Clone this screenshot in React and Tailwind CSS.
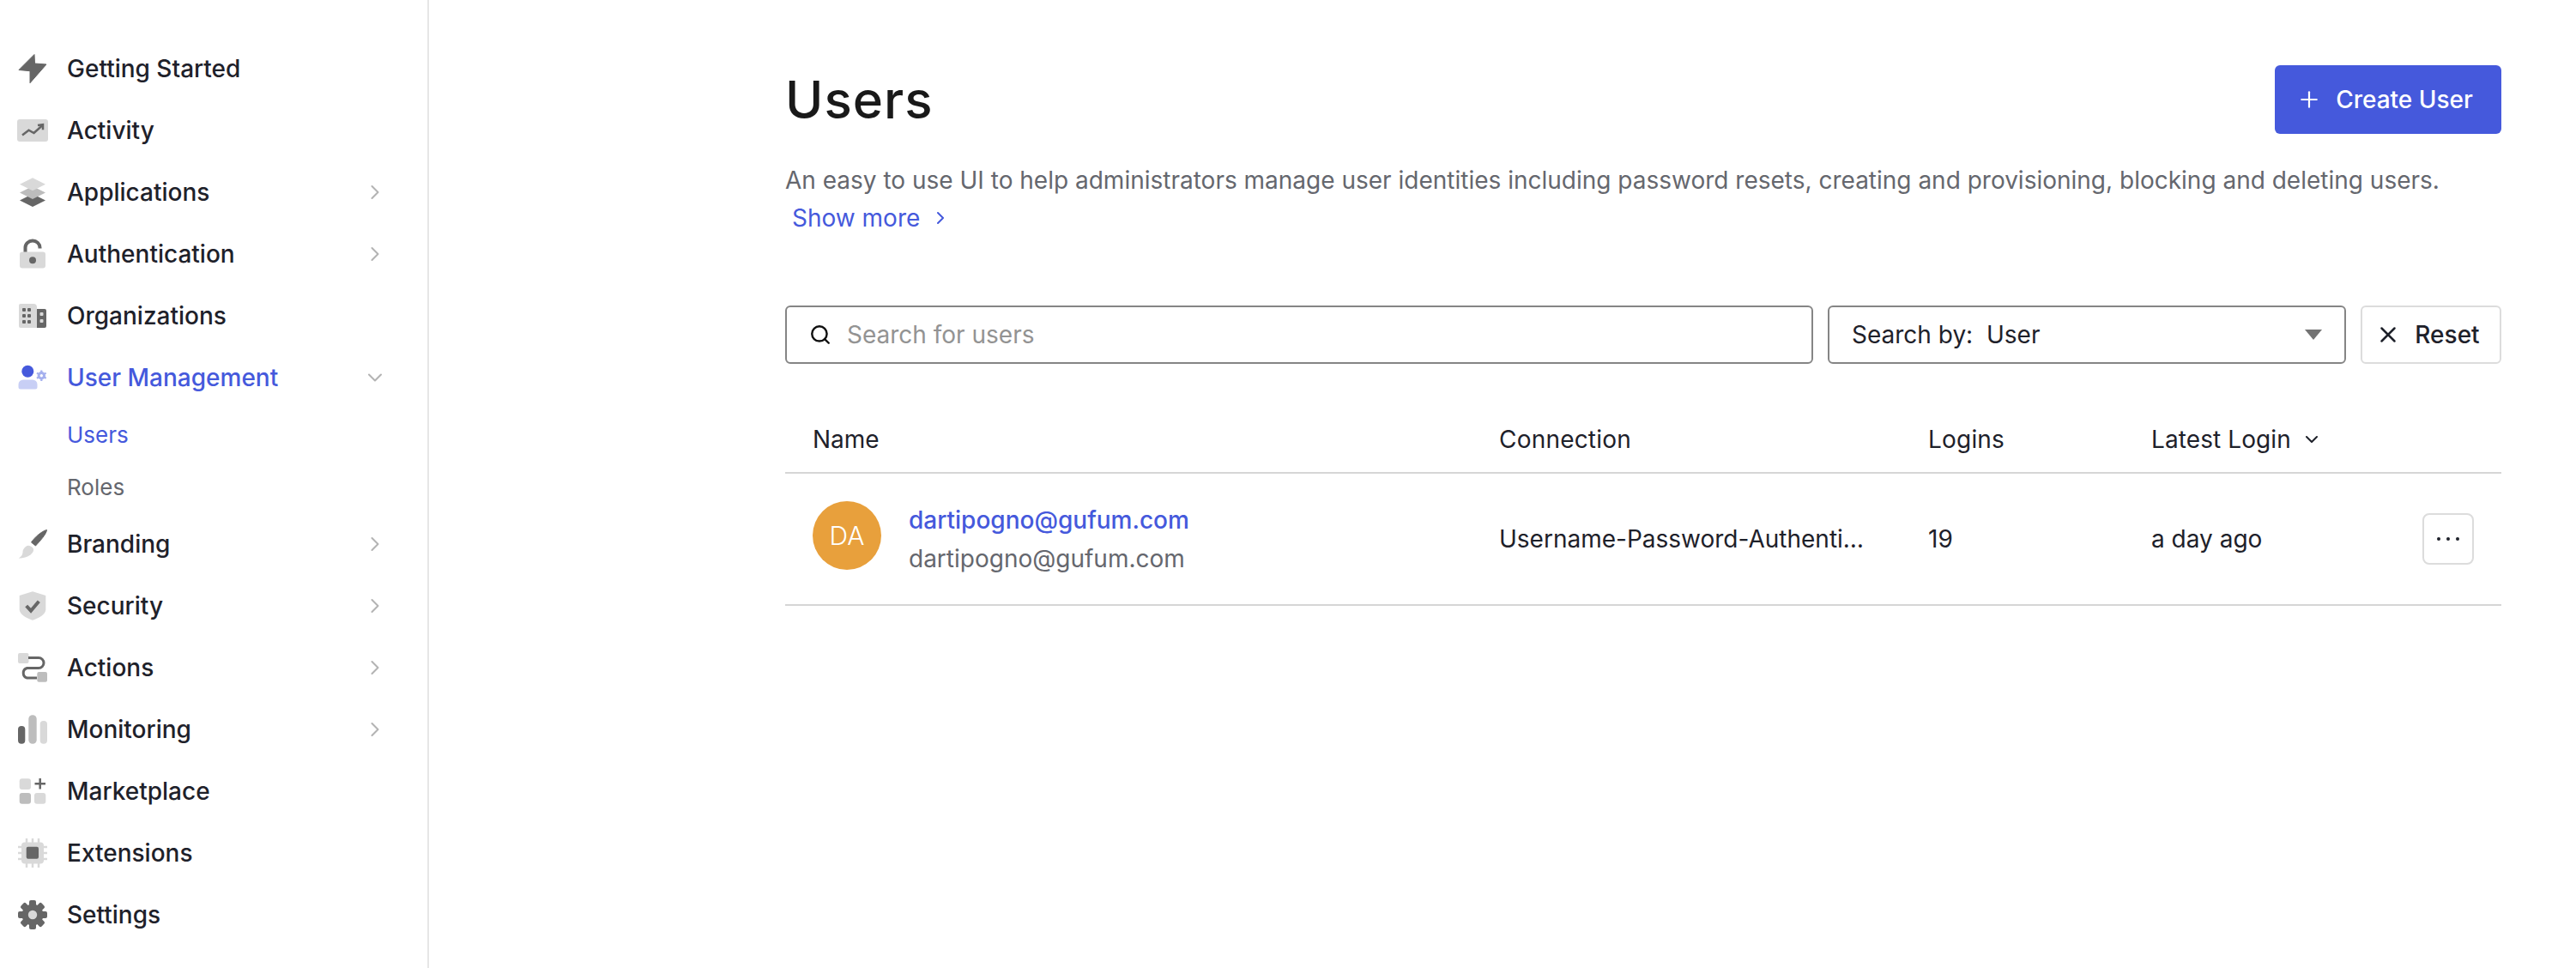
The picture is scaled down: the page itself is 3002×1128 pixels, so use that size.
import { ChevronDown, ChevronRight, Plus, Search, X } from 'lucide-react';

const DARK = '#666666';
const MID = '#bdbdbd';
const LIGHT = '#d9d9d9';

function Icon({ children }) {
  return (
    <svg viewBox="0 0 36 36" className="w-[36px] h-[36px] shrink-0">
      {children}
    </svg>
  );
}

const BoltIcon = () => (
  <Icon>
    <path d="M20 1.500 2 19.500l13 1.200v14L34 13l-13.500-1z" fill={DARK} stroke={DARK} strokeLinejoin="round" />
  </Icon>
);

const ActivityIcon = () => (
  <Icon>
    <rect x="0" y="5" width="36" height="26" rx="3" fill={LIGHT} />
    <path d="M6 23.500l7.500-5.800 6 3.300 10-9" fill="none" stroke={DARK} strokeWidth="2.500" />
    <path d="M24 12l6-.8v6" fill="none" stroke={DARK} strokeWidth="2.500" />
  </Icon>
);

const LayersIcon = () => (
  <Icon>
    <path d="M18 20l15 7.500-15 7.500-15-7.500z" fill={DARK} />
    <path d="M18 11l15 7.500-15 7.500-15-7.500z" fill={MID} />
    <path d="M18 1.300l15 7.500-15 7.500-15-7.500z" fill={LIGHT} />
  </Icon>
);

const LockIcon = () => (
  <Icon>
    <path d="M9.500 17v-6.500a8.500 8 0 0 1 17 0v1" fill="none" stroke={DARK} strokeWidth="4" />
    <rect x="3" y="15.500" width="30" height="19" rx="3" fill={LIGHT} />
    <circle cx="18" cy="25.300" r="4" fill={DARK} />
  </Icon>
);

const OrgIcon = () => (
  <Icon>
    <path d="M4 4h15a4 4 0 0 1 4 4v24H4a2 2 0 0 1-2-2V6a2 2 0 0 1 2-2z" fill={LIGHT} />
    <path d="M23 10h9a2 2 0 0 1 2 2v18a2 2 0 0 1-2 2h-9z" fill={DARK} />
    {[7, 13].map((x) => [10, 17, 24].map((y) => <rect key={`${x}-${y}`} x={x - 1} y={y - 1} width="4" height="4" rx="1" fill={DARK} />))}
    {[15, 23].map((y) => <rect key={y} x="26.500" y={y - 1} width="4" height="4" rx="1" fill={LIGHT} />)}
  </Icon>
);

const UserGearIcon = () => (
  <Icon>
    <circle cx="12.300" cy="10.700" r="7" fill="#4559dc" />
    <path d="M7 20.500h11a5.500 5.500 0 0 1 5.500 5.500v3a2.500 2.500 0 0 1-2.500 2.500H4a2.500 2.500 0 0 1-2.500-2.500v-3A5.500 5.500 0 0 1 7 20.500z" fill="#c8cff5" />
    <path d="M28.300 9.500v12.400M22.900 12.600l10.800 6.200M22.900 18.800l10.800-6.200" stroke="#a5b0ee" strokeWidth="2.200" />
    <circle cx="28.300" cy="15.700" r="3.200" fill="#ffffff" stroke="#a5b0ee" strokeWidth="3" />
  </Icon>
);

const BrushIcon = () => (
  <Icon>
    <path d="M34.500 1.500c-.5 5-8 13-13 18.500l-5-4c4-6 12-13 18-14.500z" fill={DARK} stroke={DARK} strokeLinejoin="round" />
    <path d="M10 21c3-2.500 6-.5 8 1 2 2.500 1 5-1 7-3.500 4-9.500 5.500-15.500 5.500 4-2 5-5 5-7.500 0-2.500 1.500-4.500 3.500-6z" fill={LIGHT} />
  </Icon>
);

const ShieldIcon = () => (
  <Icon>
    <path d="M18 1.300 33.300 6v16.500c0 5-8 10-15.300 12.200-7.300-2.200-15.300-7.200-15.300-12.200V6z" fill={LIGHT} />
    <path d="M10.700 18l5.300 5.700 9.300-11" fill="none" stroke={DARK} strokeWidth="4" />
  </Icon>
);

const ActionsIcon = () => (
  <Icon>
    <rect x="1" y="1" width="12.500" height="12" rx="2" fill={LIGHT} />
    <rect x="23.300" y="23" width="11.700" height="11.700" rx="2" fill={MID} />
    <path d="M13 6.500h12a6 6 0 0 1 0 12H11.500a6 6 0 0 0 0 11.500H23" fill="none" stroke={DARK} strokeWidth="3" />
  </Icon>
);

const BarsIcon = () => (
  <Icon>
    <rect x="1" y="14" width="8.300" height="20.700" rx="4" fill={DARK} />
    <rect x="13.300" y="1.300" width="9.400" height="33.400" rx="4.500" fill={MID} />
    <rect x="26.700" y="8" width="8.300" height="26.700" rx="4" fill={LIGHT} />
  </Icon>
);

const MarketIcon = () => (
  <Icon>
    <rect x="2.700" y="3.300" width="13.300" height="12.700" rx="3" fill={LIGHT} />
    <rect x="2.700" y="20" width="13.300" height="12.700" rx="3" fill={MID} />
    <rect x="20" y="20" width="13.300" height="12.700" rx="3" fill={LIGHT} />
    <path d="M26.700 3v12.600M20.500 9.300h12.500" stroke={DARK} strokeWidth="2.500" />
  </Icon>
);

const ChipIcon = () => (
  <Icon>
    <rect x="5" y="5.500" width="26" height="25" rx="4" fill={LIGHT} />
    {[11, 18, 25].map((p) => (
      <path key={p} d={`M${p} 1v34M1 ${p}h34`} stroke={LIGHT} strokeWidth="2.500" />
    ))}
    <rect x="10.700" y="10.700" width="14.300" height="14" rx="2" fill={DARK} />
  </Icon>
);

const GearIcon = () => (
  <Icon>
    {[0, 45, 90, 135, 180, 225, 270, 315].map((a) => (
      <rect key={a} x="14" y="1" width="8" height="8" rx="2" fill={DARK} transform={`rotate(${a} 18 18)`} />
    ))}
    <circle cx="18" cy="18" r="12.500" fill={DARK} />
    <circle cx="18" cy="18" r="5.200" fill={LIGHT} />
  </Icon>
);

const navTop = [
  { icon: BoltIcon, label: 'Getting Started' },
  { icon: ActivityIcon, label: 'Activity' },
  { icon: LayersIcon, label: 'Applications', arrow: true },
  { icon: LockIcon, label: 'Authentication', arrow: true },
  { icon: OrgIcon, label: 'Organizations' },
];

const navBottom = [
  { icon: BrushIcon, label: 'Branding', arrow: true },
  { icon: ShieldIcon, label: 'Security', arrow: true },
  { icon: ActionsIcon, label: 'Actions', arrow: true },
  { icon: BarsIcon, label: 'Monitoring', arrow: true },
  { icon: MarketIcon, label: 'Marketplace' },
  { icon: ChipIcon, label: 'Extensions' },
  { icon: GearIcon, label: 'Settings' },
];

function NavRow({ item }) {
  return (
    <div className="flex items-center h-[72px] gap-[22px] text-[28px] font-medium text-[#1e212a]">
      <item.icon />
      <span className="flex-1">{item.label}</span>
      {item.arrow && <ChevronRight className="w-[28px] h-[28px] text-[#b3b3b3]" strokeWidth={1.75} />}
    </div>
  );
}

function App() {
  return (
    <div className="flex h-screen overflow-hidden bg-white font-[Inter,sans-serif] text-[28px] text-[#1e212a]">
      {/* Sidebar */}
      <aside className="w-[500px] shrink-0 border-r-2 border-[#e6e6e6] pt-[44px] pl-[20px] pr-[47px]">
        {navTop.map((item) => (
          <NavRow key={item.label} item={item} />
        ))}
        <div className="flex items-center h-[72px] gap-[22px] font-medium text-[#4559dc]">
          <UserGearIcon />
          <span className="flex-1">User Management</span>
          <ChevronDown className="w-[28px] h-[28px] text-[#b3b3b3]" strokeWidth={1.75} />
        </div>
        <div className="pl-[58px] text-[26px] leading-[61px] h-[122px]">
          <div className="text-[#4559dc]">Users</div>
          <div className="text-[#65676e]">Roles</div>
        </div>
        {navBottom.map((item) => (
          <NavRow key={item.label} item={item} />
        ))}
      </aside>

      {/* Main */}
      <main className="flex-1 pl-[415px] pr-[87px] pt-[76px]">
        <div className="flex items-center justify-between h-[80px]">
          <h1 className="text-[60px] font-medium tracking-[1px] text-[#191919] leading-none">Users</h1>
          <button className="flex items-center justify-center w-[264px] h-[80px] pr-[8px] gap-[16px] rounded-[6px] bg-[#4559dc] text-white font-medium">
            <Plus className="w-[30px] h-[30px]" strokeWidth={1.75} />
            Create User
          </button>
        </div>
        <p className="mt-[32px] leading-[44px] text-[#65676e]">
          An easy to use UI to help administrators manage user identities including password resets, creating and provisioning, blocking and deleting users.
        </p>
        <a className="flex items-center h-[44px] pl-[8px] gap-[12px] text-[#4559dc]">
          Show more
          <ChevronRight className="w-[24px] h-[24px]" strokeWidth={2} />
        </a>

        {/* Filters */}
        <div className="flex gap-[17px] h-[68px] mt-[80px]">
          <div className="flex flex-1 items-center gap-[18px] px-[26px] border-2 border-[#858585] rounded-[6px]">
            <Search className="w-[26px] h-[26px] text-[#111111] shrink-0" strokeWidth={2.25} />
            <input
              placeholder="Search for users"
              className="flex-1 outline-none placeholder:text-[#939393]"
            />
          </div>
          <div className="flex items-center justify-between w-[604px] pl-[26px] pr-[26px] border-2 border-[#858585] rounded-[6px]">
            <span className="whitespace-pre">Search by:  User</span>
            <div className="w-0 h-0 border-x-[10px] border-x-transparent border-t-[12px] border-t-[#737373]" />
          </div>
          <button className="flex items-center justify-center w-[164px] pr-[8px] gap-[16px] border-2 border-[#dcdcdc] rounded-[6px] font-medium">
            <X className="w-[30px] h-[30px]" strokeWidth={2} />
            Reset
          </button>
        </div>

        {/* Table */}
        <div className="grid grid-cols-[800px_500px_260px_1fr] items-center h-[76px] mt-[50px] pl-[32px] border-b-2 border-[#d6d6d6] box-content">
          <div>Name</div>
          <div className="tracking-[0.2px]">Connection</div>
          <div className="tracking-[0.2px]">Logins</div>
          <div className="flex items-center gap-[12px] tracking-[0.1px]">
            Latest Login
            <ChevronDown className="w-[24px] h-[24px]" strokeWidth={2} />
          </div>
        </div>
        <div className="grid grid-cols-[800px_500px_260px_1fr] items-center h-[152px] pl-[32px] pr-[32px] border-b-2 border-[#d6d6d6] box-content">
          <div className="flex items-center gap-[32px]">
            <div className="flex items-center justify-center w-[80px] h-[80px] mb-[8px] rounded-full bg-[#e8a03c] text-white text-[30px] font-light">
              DA
            </div>
            <div className="flex flex-col gap-[9px] leading-[36px]">
              <span className="text-[#4559dc] font-medium">dartipogno@gufum.com</span>
              <span className="text-[#65676e]">dartipogno@gufum.com</span>
            </div>
          </div>
          <div className="truncate pr-[66px]">Username-Password-Authentication</div>
          <div>19</div>
          <div className="flex items-center justify-between">
            a day ago
            <button className="flex items-center justify-center w-[60px] h-[60px] border-2 border-[#dcdcdc] rounded-[8px]">
              <svg viewBox="0 0 28 6" className="w-[28px] h-[6px]">
                <circle cx="3" cy="3" r="2" fill="#1e212a" />
                <circle cx="14" cy="3" r="2" fill="#1e212a" />
                <circle cx="25" cy="3" r="2" fill="#1e212a" />
              </svg>
            </button>
          </div>
        </div>
      </main>
    </div>
  );
}

export default App;
